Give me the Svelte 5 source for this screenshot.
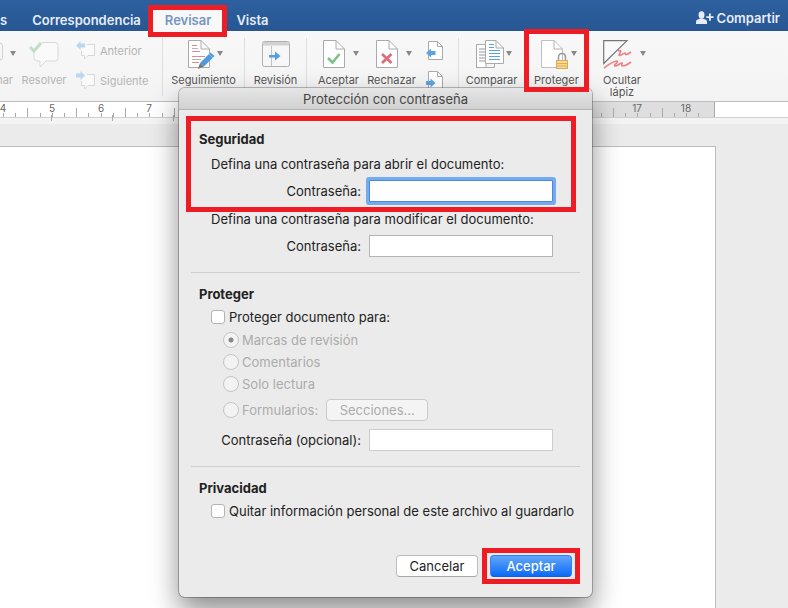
<script lang="ts">
	const start = 3;

	let openPassword = "";
	let modifyPassword = "";
	let optionalPassword = "";
	let protect = false;
	let removeInfo = false;
	let mode = "revision";

	const modes = [
		{ value: "revision", label: "Marcas de revisión" },
		{ value: "comments", label: "Comentarios" },
		{ value: "readonly", label: "Solo lectura" },
	];

	const comments = [
		{ name: "Anterior", arrow: "M0 4.500L4.500 0V2.500H9V6.500H4.500V9Z" },
		{ name: "Siguiente", arrow: "M0 2.500H4.500V0L9 4.500L4.500 9V6.500H0Z" },
	];

	const numbers = [4, 5, 6, 7, 17, 18].map((n) => ({ n, x: Math.round(start + (n - 4) * 48.8) }));
	const ticks = Array.from({ length: 58 }, (_, i) => ({
		x: Math.round(start + i * 12.2),
		tall: i % 4 === 2,
	}));
	const stops = [51, 112, 173];
</script>

<svelte:head>
	<title>Protección con contraseña</title>
</svelte:head>

<div class="app">
	<header class="tabs">
		<nav>
			<button class="tab first">s</button>
			<button class="tab">Correspondencia</button>
			<button class="tab active marked">Revisar</button>
			<button class="tab">Vista</button>
		</nav>
		<button class="share">
			<svg width="18" height="14" viewBox="0 0 18 14" fill="#e6edf6">
				<ellipse cx="5.500" cy="4" rx="3" ry="3.700" />
				<path d="M0 13V11Q0 8.500 3 8L4.500 7.500H6.500L8 8Q11 8.500 11 11V13Z" />
				<path d="M13 2.500h1.800v2.700h2.700v1.800h-2.700v2.700h-1.800V7h-2.700V5.200h2.700z" />
			</svg>
			Compartir
		</button>
	</header>

	<div class="ribbon">
		<button class="item cut" disabled>
			<span class="icons">
				<svg width="3" height="30" viewBox="0 0 3 30"><path d="M0 3Q2.500 3 2.500 6V17Q2.500 20 0 20" fill="none" stroke="#d2d2d2" /></svg>
				<svg class="caret" width="6" height="5" viewBox="0 0 6 5"><path d="M0 0h6L3 5z" /></svg>
			</span>
			<span class="label">nar</span>
		</button>
		<button class="item resolve" disabled>
			<svg width="30" height="30" viewBox="0 0 30 30" fill="none">
				<path d="M13 2.500H26Q29 2.500 29 5.500V18Q29 21 26 21H17L11 27V21H8Q5 21 5 18V12" fill="#fafafa" stroke="#d8d8d8" />
				<path d="M1 7L5 11L12 3" stroke="#bde0c4" stroke-width="3" />
			</svg>
			<span class="label">Resolver</span>
		</button>
		<div class="stack comments">
			{#each comments as { name, arrow }}
				<button class="small" disabled>
					<svg width="20" height="20" viewBox="0 0 20 20">
						<path d="M11 3.500H18.500V14.500H12L8.500 18V14.500H5.500V10" fill="#fafafa" stroke="#d8d8d8" />
						<path d={arrow} fill="#bad8f0" />
					</svg>
					{name}
				</button>
			{/each}
		</div>
		<span class="divider"></span>
		<button class="item tracking">
			<span class="icons">
				<svg width="27" height="30" viewBox="0 0 27 30" fill="none">
					<path d="M.5.500H13L21.500 9V27.500H.5Z" fill="#fff" stroke="#aaa" />
					<path d="M13 .5V9H21.500" stroke="#aaa" />
					<path d="M4 5.500h5M4 11.500h8M4 16.500h13M4 22.500h7" stroke="#e08a8a" />
					<path d="M4 8.500h6M4 19.500h9" stroke="#b5b5b5" />
					<path d="M12 23L22.500 12.500L26.500 16L16 26.500Z" fill="#4f9ade" />
					<path d="M21 14L25 18" stroke="#8fc0ea" />
					<path d="M12 23L16 26.500L10 29Z" fill="#777" />
				</svg>
				<svg class="caret" width="6" height="5" viewBox="0 0 6 5"><path d="M0 0h6L3 5z" /></svg>
			</span>
			<span class="label">Seguimiento</span>
		</button>
		<span class="divider"></span>
		<button class="item review">
			<svg width="28" height="30" viewBox="0 0 28 30" fill="none">
				<rect x=".5" y="1.500" width="27" height="25" rx="2" fill="#f7f7f7" stroke="#b0b0b0" />
				<path d="M1 2H27V5.500H1Z" fill="#d2d2d2" />
				<path d="M9.500 6V26" stroke="#c4c4c4" />
				<path d="M7 15H13V11.500L18.500 16L13 20.500V17.500H7Z" fill="#559fdf" />
			</svg>
			<span class="label">Revisión</span>
		</button>
		<span class="divider"></span>
		<div class="changes">
			<button class="item">
				<span class="icons wide">
					<svg width="22" height="30" viewBox="0 0 22 30" fill="none">
						<path d="M.5.500H13L21.500 9V27.500H.5Z" fill="#fff" stroke="#aaa" />
						<path d="M13 .5V9H21.500" stroke="#aaa" />
						<path d="M5 18L9.500 22.500L16.500 14" stroke="#7cc287" stroke-width="2.600" />
					</svg>
					<svg class="caret" width="6" height="5" viewBox="0 0 6 5"><path d="M0 0h6L3 5z" /></svg>
				</span>
				<span class="label">Aceptar</span>
			</button>
			<button class="item">
				<span class="icons wide">
					<svg width="22" height="30" viewBox="0 0 22 30" fill="none">
						<path d="M.5.500H13L21.500 9V27.500H.5Z" fill="#fff" stroke="#aaa" />
						<path d="M13 .5V9H21.500" stroke="#aaa" />
						<path d="M6 14L15.500 23M15.500 14L6 23" stroke="#dc7078" stroke-width="2.800" />
					</svg>
					<svg class="caret" width="6" height="5" viewBox="0 0 6 5"><path d="M0 0h6L3 5z" /></svg>
				</span>
				<span class="label">Rechazar</span>
			</button>
			<div class="stack">
				<button class="small" aria-label="Cambio anterior">
					<svg width="18" height="20" viewBox="0 0 18 20" fill="none">
						<path d="M2.500 .5H11.500L16.500 5.500V18.500H2.500Z" fill="#fff" stroke="#aaa" />
						<path d="M11.500 .5V5.500H16.500" stroke="#aaa" />
						<path d="M0 12L5 7.500V10H9.500V14H5V16.500Z" fill="#5ba4e2" />
					</svg>
				</button>
				<button class="small" aria-label="Cambio siguiente">
					<svg width="18" height="20" viewBox="0 0 18 20" fill="none">
						<path d="M2.500 .5H11.500L16.500 5.500V18.500H2.500Z" fill="#fff" stroke="#aaa" />
						<path d="M11.500 .5V5.500H16.500" stroke="#aaa" />
						<path d="M0 10H4.500V7.500L9.500 12L4.500 16.500V14H0Z" fill="#5ba4e2" />
					</svg>
				</button>
			</div>
		</div>
		<span class="divider"></span>
		<button class="item compare">
			<span class="icons">
				<svg width="28" height="30" viewBox="0 0 28 30" fill="none">
					<path d="M.5 4.500H10V27.500H.5Z" fill="#fff" stroke="#aaa" />
					<path d="M0 27.500H18.500V23" stroke="#aaa" />
					<path d="M3 9h6M3 12h6M3 15h6M3 18h6M3 21h6" stroke="#999" />
					<path d="M9.500.500H20L27.500 8V23.500H9.500Z" fill="#fff" stroke="#aaa" />
					<path d="M20 .5V8H27.500" stroke="#aaa" />
					<path d="M13 4.500h5M13 7.500h5M13 10.500h11M13 13.500h11M13 16.500h11M13 19.500h11" stroke="#5ba4e2" />
				</svg>
				<svg class="caret" width="6" height="5" viewBox="0 0 6 5"><path d="M0 0h6L3 5z" /></svg>
			</span>
			<span class="label">Comparar</span>
		</button>
		<button class="item protect marked">
			<span class="icons">
				<svg width="28" height="30" viewBox="0 0 28 30" fill="none">
					<path d="M.5.500H13L21.500 9V27.500H.5Z" fill="#fff" stroke="#c0c0c0" />
					<path d="M13 .5V9H21.500" stroke="#b0b0b0" />
					<path d="M17.500 20V17.500Q17.500 13.500 21 13.500T24.500 17.500V20" stroke="#999" stroke-width="1.500" />
					<rect x="15.500" y="20.500" width="11" height="8" fill="#f8d98f" stroke="#d6ac55" />
					<path d="M16 23.500h10M16 26h10" stroke="#d9af58" />
				</svg>
				<svg class="caret" width="6" height="5" viewBox="0 0 6 5"><path d="M0 0h6L3 5z" /></svg>
			</span>
			<span class="label">Proteger</span>
		</button>
		<button class="item ink">
			<span class="icons wide">
				<svg width="29" height="30" viewBox="0 0 29 30" fill="none">
					<path d="M.7.700H24L.7 23.500Z" fill="#fafafa" stroke="#777" stroke-width="1.200" />
					<path d="M15 11C20 9 17 13 16 15C17 17 20 13 22 13C22 16 25 14 28 12" stroke="#ee8085" stroke-width="1.600" />
					<path d="M1 28C5 25 10 21 14 21C16 22 10 25 12 26C15 26 17 23 19 23C20 23 17 26 20 26C23 26 25 24 28 22" stroke="#ee8085" stroke-width="1.600" />
				</svg>
				<svg class="caret" width="6" height="5" viewBox="0 0 6 5"><path d="M0 0h6L3 5z" /></svg>
			</span>
			<span class="label">Ocultar<br />lápiz</span>
		</button>
	</div>

	<div class="ruler">
		<div class="margin"></div>
		<svg width="716" height="22">
			{#each numbers as { n, x }}
				<text {x} y="10" text-anchor="middle">{n}</text>
			{/each}
			{#each ticks as { x, tall }}
				<path d="M{x + 0.5} {tall ? 6 : 11}V15" />
			{/each}
			{#each stops as x}
				<path d="M{x + 0.5} 13V19" />
			{/each}
		</svg>
	</div>

	<main>
		<div class="page"></div>
	</main>

	<div class="dialog" role="dialog" aria-labelledby="dialog-title">
		<h1 id="dialog-title">Protección con contraseña</h1>
		<form on:submit|preventDefault>
			<section>
				<div class="security marked">
					<h2>Seguridad</h2>
					<p>Defina una contraseña para abrir el documento:</p>
					<div class="field">
						<label for="open-password">Contraseña:</label>
						<input id="open-password" class="focused" type="password" bind:value={openPassword} />
					</div>
				</div>
				<p>Defina una contraseña para modificar el documento:</p>
				<div class="field">
					<label for="modify-password">Contraseña:</label>
					<input id="modify-password" type="password" bind:value={modifyPassword} />
				</div>
			</section>

			<section>
				<h2>Proteger</h2>
				<label class="check"><input type="checkbox" bind:checked={protect} />Proteger documento para:</label>
				<div class="modes">
					{#each modes as { value, label }}
						<label class="radio"><input type="radio" name="mode" {value} bind:group={mode} disabled={!protect} />{label}</label>
					{/each}
					<div class="forms">
						<label class="radio"><input type="radio" name="mode" value="forms" bind:group={mode} disabled={!protect} />Formularios:</label>
						<button type="button" class="button" disabled>Secciones...</button>
					</div>
				</div>
				<div class="field">
					<label for="optional-password">Contraseña (opcional):</label>
					<input id="optional-password" class="light" type="password" bind:value={optionalPassword} />
				</div>
			</section>

			<section>
				<h2>Privacidad</h2>
				<label class="check"><input type="checkbox" bind:checked={removeInfo} />Quitar información personal de este archivo al guardarlo</label>
			</section>

			<footer>
				<button type="button" class="button">Cancelar</button>
				<span class="accept marked"><button type="submit" class="button primary">Aceptar</button></span>
			</footer>
		</form>
	</div>
</div>

<style>
	:global(body) {
		margin: 0;
	}

	.app {
		position: relative;
		display: flex;
		flex-direction: column;
		height: 100vh;
		overflow: hidden;
		background: #ebebeb;
		color: #222;
		font-family: Inter, "Liberation Sans", sans-serif;
		font-size: 13px;
		line-height: 16px;
	}

	button,
	input {
		margin: 0;
		padding: 0;
		box-sizing: border-box;
		border: none;
		background: none;
		color: inherit;
		font: inherit;
	}

	svg {
		flex: none;
	}

	/* red callouts around the steps */
	.marked {
		position: relative;
	}

	.marked::after {
		content: "";
		position: absolute;
		z-index: 3;
		border: 5px solid #ee1c25;
		pointer-events: none;
	}

	.tabs {
		display: flex;
		justify-content: space-between;
		height: 31px;
		background: linear-gradient(#2e609f, #275693);
		color: #e6edf6;
		font-weight: 600;
	}

	nav {
		display: flex;
		align-items: flex-end;
	}

	.tab {
		height: 22px;
		padding: 0 11px 0 12px;
	}

	.tab.first {
		padding: 0 13px 0 0;
	}

	.tab.active {
		padding: 0 13px;
		background: #f8f8f8;
		color: #7596c0;
	}

	.tab.active::after {
		inset: -4px -3px -6px -4px;
	}

	.share {
		display: flex;
		align-items: center;
		gap: 3px;
		padding: 5px 8px 0 0;
	}

	.ribbon {
		display: flex;
		height: 70px;
		box-sizing: border-box;
		padding-top: 9px;
		background: linear-gradient(#f8f8f8, #f3f3f3);
		color: #555;
		font-size: 11px;
		line-height: 12px;
	}

	.item {
		display: flex;
		flex-direction: column;
		align-items: center;
		flex: none;
		gap: 4px;
	}

	.item:disabled,
	.small:disabled {
		color: #b4b4b4;
	}

	.icons {
		display: flex;
		gap: 2px;
		padding-left: 4px;
	}

	.icons.wide {
		gap: 8px;
	}

	.caret {
		margin-top: 11px;
		fill: #888;
	}

	.cut {
		width: 20px;
		padding-right: 7px;
		align-items: flex-end;
	}

	.cut .icons {
		gap: 7px;
		padding: 0;
		margin-right: -3px;
	}

	.resolve {
		width: 48px;
	}

	.tracking {
		width: 81px;
	}

	.review {
		width: 61px;
	}

	.changes {
		display: flex;
		padding-left: 5px;
	}

	.changes .item {
		width: 53px;
	}

	.compare,
	.protect {
		width: 65px;
	}

	.ink {
		width: 66px;
	}

	.protect::after {
		inset: -11px 0 9px;
	}

	.stack {
		display: flex;
		flex-direction: column;
		gap: 10px;
		padding: 1px 14px 0 8px;
	}

	.comments {
		width: 86px;
		padding: 1px 0 0 8px;
	}

	.small {
		display: flex;
		align-items: center;
		gap: 4px;
		height: 20px;
	}

	.divider {
		width: 1px;
		height: 58px;
		margin-top: -2px;
		background: #dedede;
	}

	.ruler {
		position: relative;
		height: 23px;
		box-sizing: border-box;
		border-top: 1px solid #bdbdbd;
		background: linear-gradient(#fff 15px, #cfcfcf 15px, #cfcfcf 16px, #f4f4f4 16px);
	}

	.margin {
		position: absolute;
		left: 570px;
		right: 73px;
		height: 15px;
		background: #dedede;
		border-right: 1px solid #aaa;
	}

	.ruler svg {
		position: relative;
		display: block;
	}

	.ruler text {
		fill: #666;
		font-size: 10px;
	}

	.ruler path {
		stroke: #aaa;
	}

	main {
		display: flex;
		flex: 1;
		padding: 22px 72px 0 0;
	}

	.page {
		flex: 1;
		border: solid #bcbcbc;
		border-width: 1px 1px 0 0;
		background: #fff;
	}

	.dialog {
		position: absolute;
		z-index: 2;
		top: 88px;
		left: 179px;
		width: 413px;
		border-radius: 6px;
		background: #ebebeb;
		box-shadow: 0 0 0 1px rgba(0, 0, 0, 0.25), 0 14px 28px rgba(0, 0, 0, 0.45);
	}

	h1 {
		margin: 0;
		height: 21px;
		border-bottom: 1px solid #b4b4b4;
		border-radius: 6px 6px 0 0;
		background: linear-gradient(#e5e5e5, #d1d1d1);
		color: #444;
		font-size: 13px;
		font-weight: 400;
		line-height: 22px;
		text-align: center;
	}

	form {
		padding: 8px 12px 20px;
	}

	section {
		padding: 13px 0 15px;
	}

	section + section {
		border-top: 1px solid #cfcfcf;
	}

	section:last-of-type {
		padding-bottom: 0;
	}

	h2 {
		margin: 0 0 0 8px;
		font-size: 13px;
		font-weight: 700;
		line-height: 16px;
	}

	p {
		margin: 9px 0 8px 20px;
		white-space: nowrap;
	}

	.security::after {
		inset: -15px 4px -10px -5px;
	}

	.field {
		display: grid;
		grid-template-columns: 170px 184px;
		align-items: center;
		gap: 8px;
		text-align: right;
	}

	.field label {
		white-space: nowrap;
	}

	.field input {
		height: 22px;
		border: 1px solid #b5b5b5;
		background: #fff;
		outline: none;
	}

	.field input.light {
		border-color: #cecece;
	}

	.field input.focused {
		border-color: #4a8ad8;
		border-radius: 1px;
		box-shadow: 0 0 0 3px #74aaf0;
	}

	.check {
		display: flex;
		gap: 4px;
		margin: 7px 0 0 20px;
		align-items: center;
		white-space: nowrap;
	}

	.check input {
		appearance: none;
		width: 14px;
		height: 14px;
		border: 1px solid #b4b4b4;
		border-radius: 3px;
		background: #fff;
	}

	.check input:checked {
		background: #2f7cf6;
	}

	.modes {
		display: flex;
		flex-direction: column;
		gap: 6px;
		margin: 7px 0 8px 32px;
		color: #ababab;
	}

	.radio {
		display: flex;
		align-items: center;
		gap: 3px;
	}

	.radio input {
		appearance: none;
		width: 16px;
		height: 16px;
		border: 1px solid #c4c4c4;
		border-radius: 50%;
		background: #f3f3f3;
	}

	.radio input:checked {
		background: radial-gradient(circle, #888 2px, #f3f3f3 3px);
	}

	.forms {
		display: flex;
		align-items: center;
		gap: 8px;
		padding-top: 1px;
	}

	.button {
		height: 22px;
		width: 82px;
		border: 1px solid #bdbdbd;
		border-bottom-color: #a8a8a8;
		border-radius: 4px;
		background: #fff;
	}

	.forms .button {
		width: 102px;
		border-color: #cacaca;
		background: #f4f4f4;
	}

	.primary {
		border-color: #2f83f5 #2f83f5 #0a62e0;
		background: linear-gradient(#63a7fa, #0a6af6);
		color: #fff;
		font-weight: 500;
	}

	footer {
		display: flex;
		justify-content: flex-end;
		gap: 12px;
		margin-top: 36px;
		padding-right: 8px;
	}

	.accept {
		display: flex;
	}

	.accept::after {
		inset: -7px -8px;
	}
</style>
